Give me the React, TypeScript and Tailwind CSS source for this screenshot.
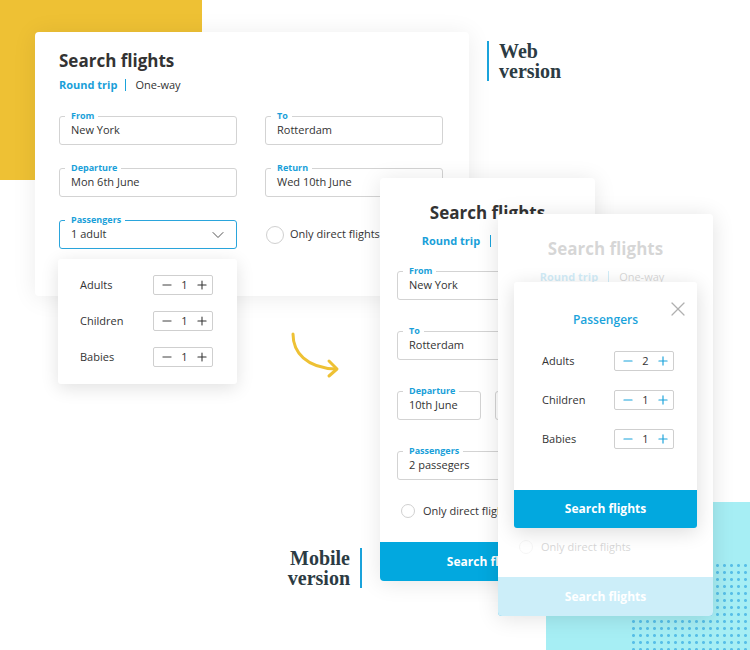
import React from 'react';
import { Minus, Plus, ChevronDown, X } from 'lucide-react';

interface FieldProps {
  label: string;
  value: string;
  active?: boolean;
  className?: string;
}

const Field: React.FC<FieldProps> = ({ label, value, active, className = '' }) => (
  <div
    className={`relative flex h-[29px] items-center rounded-[3px] border pl-[11px] ${
      active ? 'border-[#2aa5dc]' : 'border-[#d3d3d3]'
    } ${className}`}
  >
    <span className="absolute left-[5px] top-[-7px] bg-white pl-[6px] pr-[4px] text-[9px] font-bold leading-[12px] text-[#1a9fd9]">
      {label}
    </span>
    <span className="text-[11px] text-[#333]">{value}</span>
    {active && <ChevronDown size={20} strokeWidth={1.2} className="ml-auto mr-[8px] text-[#555]" />}
  </div>
);

const TripToggle: React.FC<{ className?: string }> = ({ className = '' }) => (
  <div className={`flex items-center text-[11px] leading-[16px] ${className}`}>
    <span className="font-bold text-[#1a9fd9]">Round trip</span>
    <span className="mx-[10px] h-[12px] w-px bg-[#1aa3db]" />
    <span className="text-[#333]">One-way</span>
  </div>
);

const Radio: React.FC<{ big?: boolean; className?: string }> = ({ big, className = '' }) => (
  <div className={`flex items-center ${big ? 'gap-[6px]' : 'gap-[8px]'} ${className}`}>
    <span
      className={`rounded-full border border-[#d0d0d0] bg-white ${big ? 'h-[18px] w-[18px]' : 'h-[14px] w-[14px]'}`}
    />
    <span className="text-[11px] text-[#333]">Only direct flights</span>
  </div>
);

const Counter: React.FC<{ n: number; blue?: boolean }> = ({ n, blue }) => (
  <div className="flex h-[20px] w-[60px] items-center justify-between rounded-[2px] border border-[#cfcfcf] pl-[6px] pr-[3px]">
    <Minus size={14} strokeWidth={blue ? 1.9 : 1.6} className={blue ? 'text-[#1aa3db]' : 'text-[#333]'} />
    <span className="text-[11px] text-[#333]">{n}</span>
    <Plus size={14} strokeWidth={blue ? 2 : 1.8} className={blue ? 'text-[#1aa3db]' : 'text-[#333]'} />
  </div>
);

// Mobile form, shared by both phone mockups. When the modal is open the
// fields sit under it, so only their space is kept.
const MobileForm: React.FC<{ covered?: boolean }> = ({ covered }) => (
  <div className="flex h-full flex-col">
    <div className="px-[17px] pt-[23px]">
      <h2 className="text-center text-[17px] font-bold leading-[24px] text-[#333]">Search flights</h2>
      <TripToggle className="mt-[8px] justify-center pr-[7px]" />
      {covered ? (
        <div className="mt-[22px] h-[209px]" />
      ) : (
        <div className="mt-[22px] flex flex-col gap-[31px]">
          <Field label="From" value="New York" />
          <Field label="To" value="Rotterdam" />
          <div className="grid grid-cols-2 gap-[14px]">
            <Field label="Departure" value="10th June" />
            <Field label="Return" value="" />
          </div>
          <Field label="Passengers" value="2 passegers" />
        </div>
      )}
      <Radio className="ml-[4px] mt-[23px]" />
    </div>
    <button className="mt-auto h-[39px] w-full rounded-b-[4px] bg-[#02a8df] text-[12px] font-bold text-white">
      Search flights
    </button>
  </div>
);

const rows: [string, number][] = [
  ['Adults', 1],
  ['Children', 1],
  ['Babies', 1],
];

const mobileRows: [string, number][] = [
  ['Adults', 2],
  ['Children', 1],
  ['Babies', 1],
];

export default function App() {
  return (
    <div className="relative h-[650px] w-[750px] overflow-hidden bg-white font-['Open_Sans',sans-serif]">
      {/* Background shapes */}
      <div className="absolute left-0 top-0 h-[180px] w-[202px] bg-[#eec134]" />
      <div className="absolute left-[546px] top-[502px] h-[148px] w-[204px] bg-[#a6eef4]" />
      <div className="absolute left-[630px] top-[562px] h-[88px] w-[120px] bg-[radial-gradient(circle,#58bfe8_1.2px,transparent_1.7px)] bg-[length:7px_7px]" />

      {/* Web card */}
      <div className="absolute left-[35px] top-[32px] h-[264px] w-[434px] rounded-[4px] bg-white pl-[24px] pt-[17px] shadow-[0_2px_24px_rgba(0,0,0,0.08)]">
        <h1 className="text-[17px] font-bold leading-[24px] text-[#333]">Search flights</h1>
        <TripToggle className="mt-[4px] [&>span:nth-child(2)]:ml-[8px] [&>span:nth-child(2)]:mr-[9px]" />
        <div className="mt-[23px] grid grid-cols-[178px_178px] gap-x-[28px] gap-y-[23px]">
          <Field label="From" value="New York" />
          <Field label="To" value="Rotterdam" />
          <Field label="Departure" value="Mon 6th June" />
          <Field label="Return" value="Wed 10th June" />
          <Field label="Passengers" value="1 adult" active />
          <Radio big className="ml-[1px]" />
        </div>
      </div>

      {/* Passengers dropdown */}
      <div className="absolute left-[58px] top-[259px] flex h-[125px] w-[179px] flex-col gap-[16px] rounded-[3px] bg-white pl-[22px] pt-[16px] shadow-[0_4px_18px_rgba(0,0,0,0.12)]">
        {rows.map(([label, n]) => (
          <div key={label} className="flex items-center">
            <span className="w-[73px] text-[11px] text-[#333]">{label}</span>
            <Counter n={n} />
          </div>
        ))}
      </div>

      {/* Labels */}
      <div className="absolute left-[487px] top-[41px] flex gap-[10px]">
        <span className="w-[2px] bg-[#1aa3db]" />
        <div className="font-['Liberation_Serif',serif] text-[20px] font-bold leading-[20px] text-[#2c3b43]">
          Web
          <br />
          version
        </div>
      </div>
      <div className="absolute left-[268px] top-[548px] flex w-[94px] justify-end gap-[10px]">
        <div className="text-right font-['Liberation_Serif',serif] text-[20px] font-bold leading-[20px] text-[#2c3b43]">
          Mobile
          <br />
          version
        </div>
        <span className="w-[2px] bg-[#1aa3db]" />
      </div>

      {/* Arrow */}
      <svg className="absolute left-[285px] top-[325px]" width="60" height="60" viewBox="0 0 60 60" fill="none">
        <path d="M8 9 C8 27 21 43 51 44" stroke="#eec134" strokeWidth="3" strokeLinecap="round" />
        <path d="M44 36 L52 44 L44 51" stroke="#eec134" strokeWidth="3" strokeLinecap="round" strokeLinejoin="round" />
      </svg>

      {/* Mobile card 1 */}
      <div className="absolute left-[380px] top-[178px] h-[403px] w-[215px] rounded-[4px] bg-white shadow-[0_2px_22px_rgba(0,0,0,0.1)]">
        <MobileForm />
      </div>

      {/* Mobile card 2 with passengers modal */}
      <div className="absolute left-[498px] top-[214px] h-[402px] w-[215px] rounded-[4px] bg-white shadow-[0_2px_22px_rgba(0,0,0,0.12)]">
        <MobileForm covered />
        <div className="absolute inset-0 rounded-[4px] bg-white/80" />
        <div className="absolute left-[16px] top-[68px] flex h-[246px] w-[183px] flex-col rounded-[3px] bg-white shadow-[0_4px_20px_rgba(0,0,0,0.14)]">
          <X size={24} strokeWidth={1.2} className="absolute right-[7px] top-[15px] text-[#b0b0b0]" />
          <h3 className="pt-[29px] text-center text-[12px] font-semibold leading-[18px] text-[#1aa3db]">Passengers</h3>
          <div className="mt-[22px] flex flex-col gap-[19px] pl-[28px]">
            {mobileRows.map(([label, n]) => (
              <div key={label} className="flex items-center">
                <span className="w-[72px] text-[11px] text-[#333]">{label}</span>
                <Counter n={n} blue />
              </div>
            ))}
          </div>
          <button className="mt-auto h-[38px] w-full rounded-b-[3px] bg-[#02a8df] text-[12px] font-bold text-white">
            Search flights
          </button>
        </div>
      </div>
    </div>
  );
}
